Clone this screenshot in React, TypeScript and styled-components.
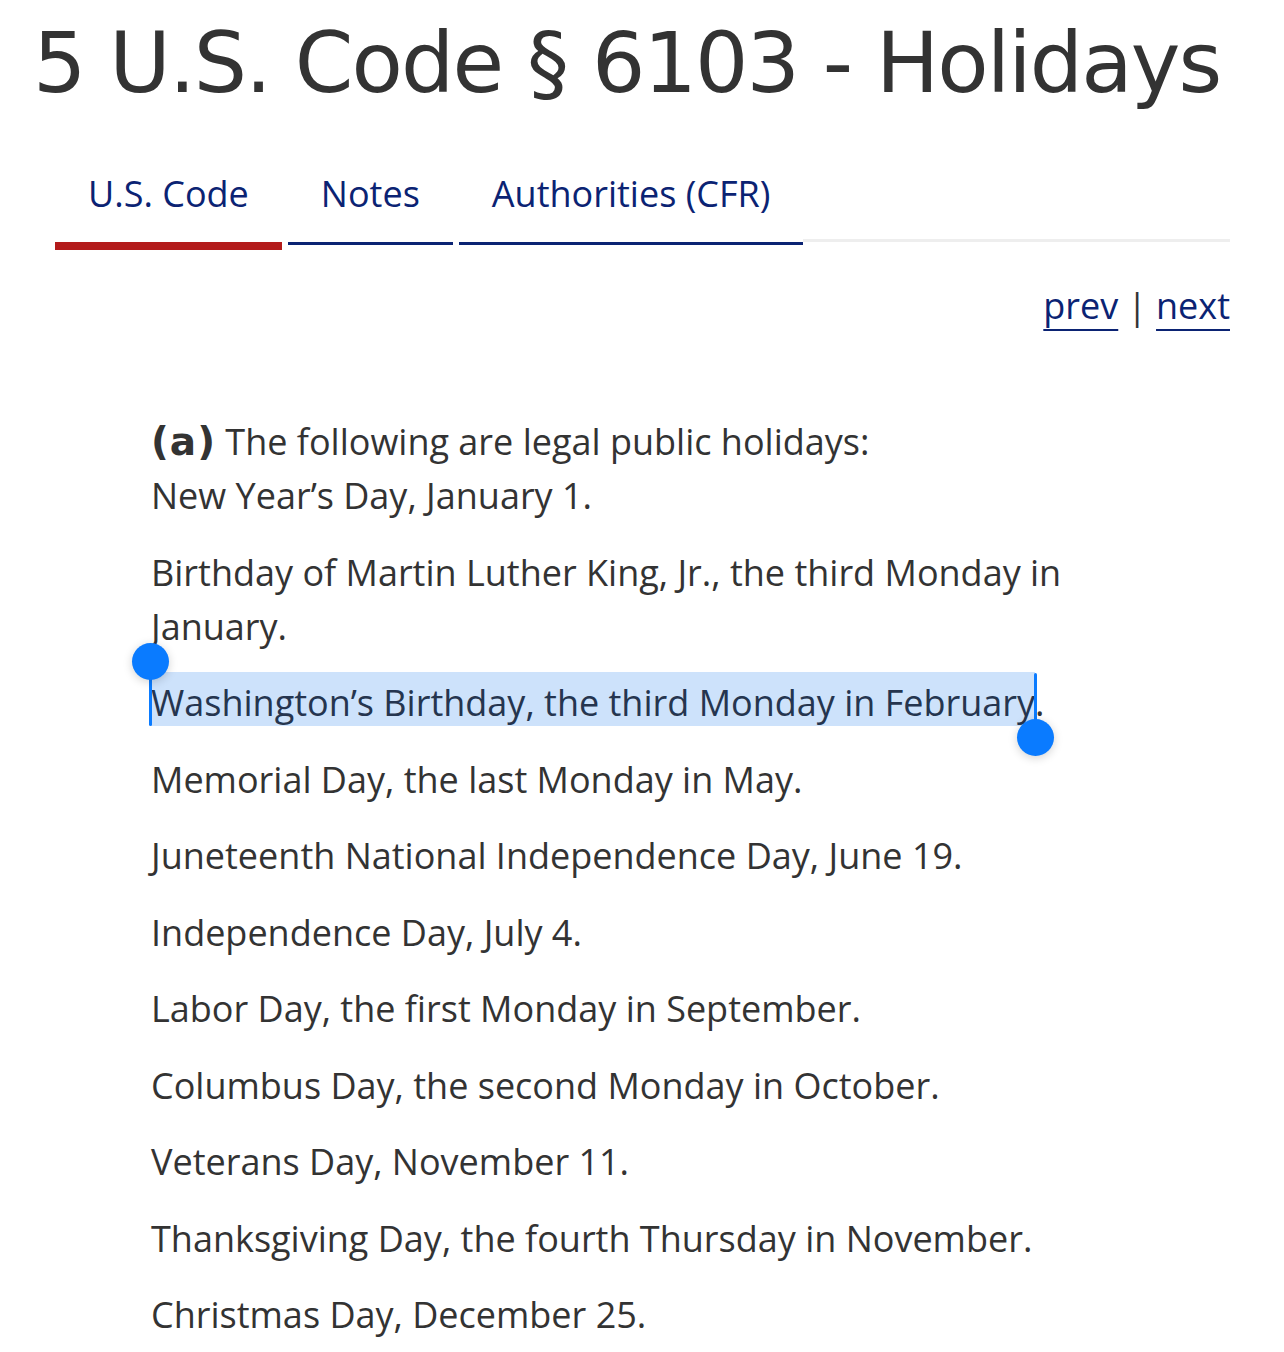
import React from "react";
import styled, { createGlobalStyle } from "styled-components";

const GlobalStyle = createGlobalStyle`
  html, body {
    margin: 0;
    padding: 0;
    background: #fff;
  }
  body {
    font-family: "Open Sans", "Noto Sans", sans-serif;
    color: #333;
  }
`;

const tabs = [
  { label: "U.S. Code", active: true },
  { label: "Notes", active: false },
  { label: "Authorities (CFR)", active: false },
];

const holidays = [
  "Birthday of Martin Luther King, Jr., the third Monday in January.",
  "__washington__",
  "Memorial Day, the last Monday in May.",
  "Juneteenth National Independence Day, June 19.",
  "Independence Day, July 4.",
  "Labor Day, the first Monday in September.",
  "Columbus Day, the second Monday in October.",
  "Veterans Day, November 11.",
  "Thanksgiving Day, the fourth Thursday in November.",
  "Christmas Day, December 25.",
];

export default function App() {
  return (
    <Page>
      <GlobalStyle />
      <Title>5 U.S. Code § 6103 - Holidays</Title>

      <TabBar>
        {tabs.map((t) => (
          <Tab key={t.label} $active={t.active}>
            <a href="#">{t.label}</a>
          </Tab>
        ))}
        <TabFiller />
      </TabBar>

      <Pager>
        <a href="#">prev</a>
        <Sep>|</Sep>
        <a href="#">next</a>
      </Pager>

      <Section>
        <Chapeau>
          <Num>(a)</Num> The following are legal public holidays:
        </Chapeau>
        <Item $first>New Year’s Day, January 1.</Item>
        {holidays.map((h) =>
          h === "__washington__" ? (
            <Item key={h}>
              <Selected>
                Washington’s Birthday, the third Monday in February
                <StartHandle />
                <EndHandle />
              </Selected>
              .
            </Item>
          ) : (
            <Item key={h}>{h}</Item>
          )
        )}
      </Section>
    </Page>
  );
}

const Page = styled.div`
  width: 1284px;
  min-height: 1352px;
  overflow: hidden;
`;

const Title = styled.h1`
  margin: 14px 0 0 33px;
  font-family: "DejaVu Sans", Verdana, sans-serif;
  font-weight: 400;
  font-size: 84px;
  letter-spacing: -1.9px;
  line-height: normal;
  color: #333;
  white-space: nowrap;
`;

const TabBar = styled.nav`
  display: flex;
  align-items: flex-start;
  gap: 6px;
  margin: 58px 54px 0 55px;
`;

const Tab = styled.div<{ $active: boolean }>`
  padding: 0 33px 24px;
  border-bottom: ${(p) => (p.$active ? "8px solid #b31b1b" : "3px solid #0b2373")};

  a {
    font-size: 36px;
    line-height: 48px;
    color: #0b2373;
    text-decoration: none;
    white-space: nowrap;
  }
`;

const TabFiller = styled.div`
  flex: 1;
  align-self: stretch;
  margin-left: -6px;
  border-bottom: 3px solid #eeeeee;
  height: 72px;
  box-sizing: border-box;
`;

const Pager = styled.div`
  display: flex;
  justify-content: flex-end;
  align-items: baseline;
  gap: 9px;
  margin: 32px 54px 0 0;
  font-size: 36px;
  line-height: 48px;

  a {
    color: #0b2373;
    text-decoration: underline;
    text-decoration-thickness: 2px;
    text-underline-offset: 10px;
    text-decoration-skip-ink: none;
  }
`;

const Sep = styled.span`
  color: #333;
`;

const Section = styled.div`
  margin: 85px 150px 0 151px;
  font-size: 36px;
  line-height: 54px;
  color: #333;
`;

const Chapeau = styled.div``;

const Num = styled.span`
  font-family: "DejaVu Sans", Verdana, sans-serif;
  font-weight: 700;
  font-size: 39px;
  letter-spacing: 1px;
  line-height: 0;
`;

const Item = styled.div<{ $first?: boolean }>`
  margin-top: ${(p) => (p.$first ? "0" : "22.5px")};
`;

const Selected = styled.span`
  position: relative;
  isolation: isolate;
  display: inline-block;
  margin-left: -1px;
  padding-left: 1px;
  color: #25354f;

  &::before {
    content: "";
    position: absolute;
    left: 0;
    right: 0;
    top: -4px;
    bottom: 4px;
    background: #cde2fb;
    z-index: -1;
  }
`;

const Handle = styled.span`
  position: absolute;
  width: 3px;
  background: #0a7bff;
  border-radius: 2px;

  &::after {
    content: "";
    position: absolute;
    left: -17px;
    width: 37px;
    height: 37px;
    border-radius: 50%;
    background: #0a7bff;
    box-shadow: 0 2px 10px rgba(0, 0, 0, 0.18);
  }
`;

const StartHandle = styled(Handle)`
  left: -1px;
  top: -15px;
  height: 65px;

  &::after {
    top: -18px;
  }
`;

const EndHandle = styled(Handle)`
  right: -2px;
  top: -3px;
  height: 65px;

  &::after {
    bottom: -18px;
  }
`;
